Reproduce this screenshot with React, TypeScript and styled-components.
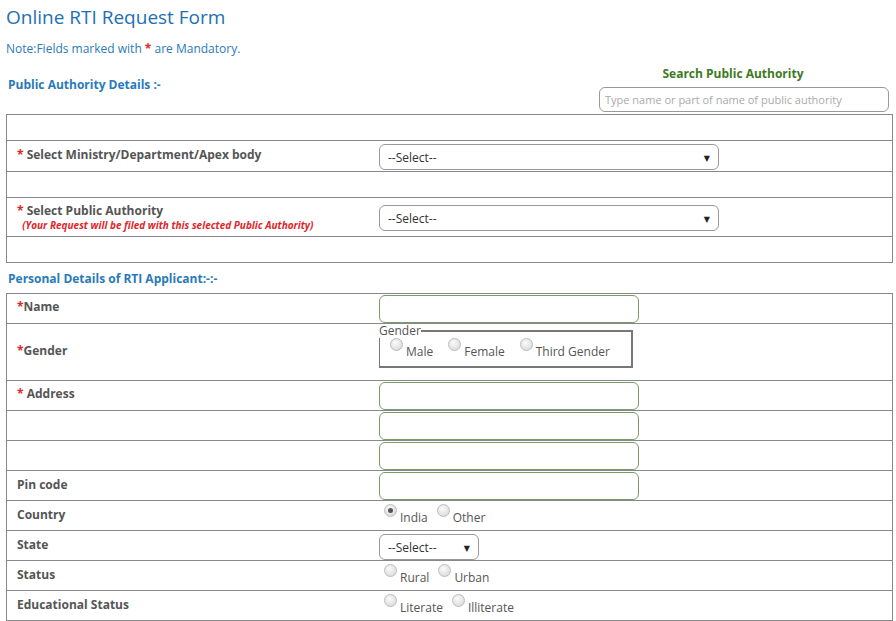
import styled, { createGlobalStyle } from "styled-components";

const Global = createGlobalStyle`
  body { margin: 0; font-family: "Open Sans", "DejaVu Sans", sans-serif; background: #fff; }
`;

const Page = styled.div`
  padding: 0 3px 0 6px;
  width: 887px;
`;

const Title = styled.h1`
  margin: 0;
  padding-top: 4px;
  font-size: 19px;
  font-weight: 400;
  color: #1e6fb4;
  line-height: 26px;
`;

const Note = styled.p`
  margin: 11px 0 0;
  font-size: 12px;
  color: #2a7ab8;
  line-height: 16px;
`;

const Star = styled.span`
  color: #e0262b;
  font-weight: 700;
`;

const HeaderRow = styled.div`
  display: flex;
  justify-content: space-between;
  align-items: flex-start;
  margin-top: 9px;
`;

const SectionTitle = styled.div<{ $top?: number }>`
  margin-top: ${(p) => p.$top ?? 0}px;
  padding-left: 2px;
  font-size: 12px;
  font-weight: 700;
  color: #2a7ab8;
  line-height: 16px;
`;

const SearchBox = styled.div`
  display: flex;
  flex-direction: column;
  align-items: center;
  width: 290px;
  margin-right: 4px;
`;

const SearchLabel = styled.div`
  font-size: 12px;
  font-weight: 700;
  color: #3d7a1e;
  line-height: 16px;
  margin-right: 22px;
`;

const SearchInput = styled.input`
  margin-top: 5px;
  width: 290px;
  height: 25px;
  box-sizing: border-box;
  border: 1px solid #999;
  border-radius: 6px;
  padding: 0 5px;
  font-family: inherit;
  font-size: 11px;
  &::placeholder { color: #aaa; }
`;

const Table = styled.div<{ $top?: number }>`
  margin-top: ${(p) => p.$top ?? 3}px;
  border: 1px solid #888;
  border-bottom: none;
`;

const Row = styled.div<{ $h: number }>`
  display: grid;
  grid-template-columns: 372px 1fr;
  height: ${(p) => p.$h}px;
  border-bottom: 1px solid #888;
  box-sizing: border-box;
`;

const Label = styled.div<{ $pt?: number }>`
  padding: ${(p) => p.$pt ?? 0}px 0 0 10px;
  font-size: 12px;
  font-weight: 700;
  color: #555;
  line-height: 16px;
`;

const Hint = styled.div`
  padding-left: 10px;
  font-size: 10px;
  font-style: italic;
  font-weight: 700;
  color: #e0262b;
  line-height: 13px;
`;

const Cell = styled.div<{ $pt?: number }>`
  padding-top: ${(p) => p.$pt ?? 0}px;
  display: flex;
  align-items: flex-start;
`;

const Select = styled.div<{ $w: number }>`
  width: ${(p) => p.$w}px;
  height: 26px;
  box-sizing: border-box;
  border: 1px solid #999;
  border-radius: 6px;
  display: flex;
  align-items: center;
  justify-content: space-between;
  padding: 0 8px 0 8px;
  font-size: 12px;
  color: #333;
  &::after { content: "▼"; font-size: 8px; color: #222; }
`;

const TextBox = styled.input`
  width: 260px;
  height: 28px;
  box-sizing: border-box;
  border: 1px solid #7a9a6a;
  border-radius: 6px;
`;

const Fieldset = styled.fieldset`
  margin: 0;
  width: 254px;
  height: 44px;
  box-sizing: border-box;
  border: 2px solid #777;
  border-left-width: 1px;
  padding: 0 0 0 5px;
  display: flex;
  gap: 6px;
  legend { font-size: 12px; color: #555; padding: 0; line-height: 14px; margin-left: -6px; }
`;

const RadioItem = styled.span`
  display: inline-flex;
  align-items: flex-start;
  font-size: 12px;
  color: #555;
  margin-right: 4px;
`;

const Dot = styled.span<{ $on?: boolean }>`
  width: 13px;
  height: 13px;
  border-radius: 50%;
  box-sizing: border-box;
  border: 1px solid #bbb;
  background: radial-gradient(circle at 40% 35%, #fafafa, #d4d4d4);
  margin: 0 3px 0 5px;
  position: relative;
  &::after {
    content: "";
    display: ${(p) => (p.$on ? "block" : "none")};
    position: absolute;
    left: 3px; top: 3px;
    width: 5px; height: 5px;
    border-radius: 50%;
    background: #555;
  }
`;

const RadioText = styled.span`
  padding-top: 7px;
  line-height: 14px;
`;

function Radio({ label, on }: { label: string; on?: boolean }) {
  return (
    <RadioItem>
      <Dot $on={on} />
      <RadioText>{label}</RadioText>
    </RadioItem>
  );
}

function RadioRow({ items, checked }: { items: string[]; checked?: string }) {
  return (
    <Cell $pt={3}>
      {items.map((i) => (
        <Radio key={i} label={i} on={i === checked} />
      ))}
    </Cell>
  );
}

export default function App() {
  return (
    <Page>
      <Global />
      <Title>Online RTI Request Form</Title>
      <Note>
        Note:Fields marked with <Star>*</Star> are Mandatory.
      </Note>
      <HeaderRow>
        <SectionTitle $top={11}>Public Authority Details :-</SectionTitle>
        <SearchBox>
          <SearchLabel>Search Public Authority</SearchLabel>
          <SearchInput placeholder="Type name or part of name of public authority" />
        </SearchBox>
      </HeaderRow>
      <Table $top={2}>
        <Row $h={26} />
        <Row $h={31}>
          <Label $pt={6}>
            <Star>*</Star> Select Ministry/Department/Apex body
          </Label>
          <Cell $pt={3}>
            <Select $w={340}>--Select--</Select>
          </Cell>
        </Row>
        <Row $h={26} />
        <Row $h={39}>
          <div>
            <Label $pt={5}>
              <Star>*</Star> Select Public Authority
            </Label>
            <Hint>&nbsp;&nbsp;(Your Request will be filed with this selected Public Authority)</Hint>
          </div>
          <Cell $pt={7}>
            <Select $w={340}>--Select--</Select>
          </Cell>
        </Row>
        <Row $h={26} />
      </Table>
      <SectionTitle $top={8}>Personal Details of RTI Applicant:-:-</SectionTitle>
      <Table $top={6}>
        <Row $h={30}>
          <Label $pt={5}><Star>*</Star>Name</Label>
          <Cell $pt={1}><TextBox /></Cell>
        </Row>
        <Row $h={57}>
          <Label $pt={19}><Star>*</Star>Gender</Label>
          <Cell>
            <Fieldset>
              <legend>Gender</legend>
              <Radio label="Male" />
              <Radio label="Female" />
              <Radio label="Third Gender" />
            </Fieldset>
          </Cell>
        </Row>
        <Row $h={30}>
          <Label $pt={5}><Star>*</Star> Address</Label>
          <Cell $pt={1}><TextBox /></Cell>
        </Row>
        <Row $h={30}>
          <div />
          <Cell $pt={1}><TextBox /></Cell>
        </Row>
        <Row $h={30}>
          <div />
          <Cell $pt={1}><TextBox /></Cell>
        </Row>
        <Row $h={30}>
          <Label $pt={6}>Pin code</Label>
          <Cell $pt={1}><TextBox /></Cell>
        </Row>
        <Row $h={30}>
          <Label $pt={6}>Country</Label>
          <RadioRow items={["India", "Other"]} checked="India" />
        </Row>
        <Row $h={30}>
          <Label $pt={6}>State</Label>
          <Cell $pt={3}><Select $w={100}>--Select--</Select></Cell>
        </Row>
        <Row $h={30}>
          <Label $pt={6}>Status</Label>
          <RadioRow items={["Rural", "Urban"]} />
        </Row>
        <Row $h={30}>
          <Label $pt={6}>Educational Status</Label>
          <RadioRow items={["Literate", "Illiterate"]} />
        </Row>
      </Table>
    </Page>
  );
}
